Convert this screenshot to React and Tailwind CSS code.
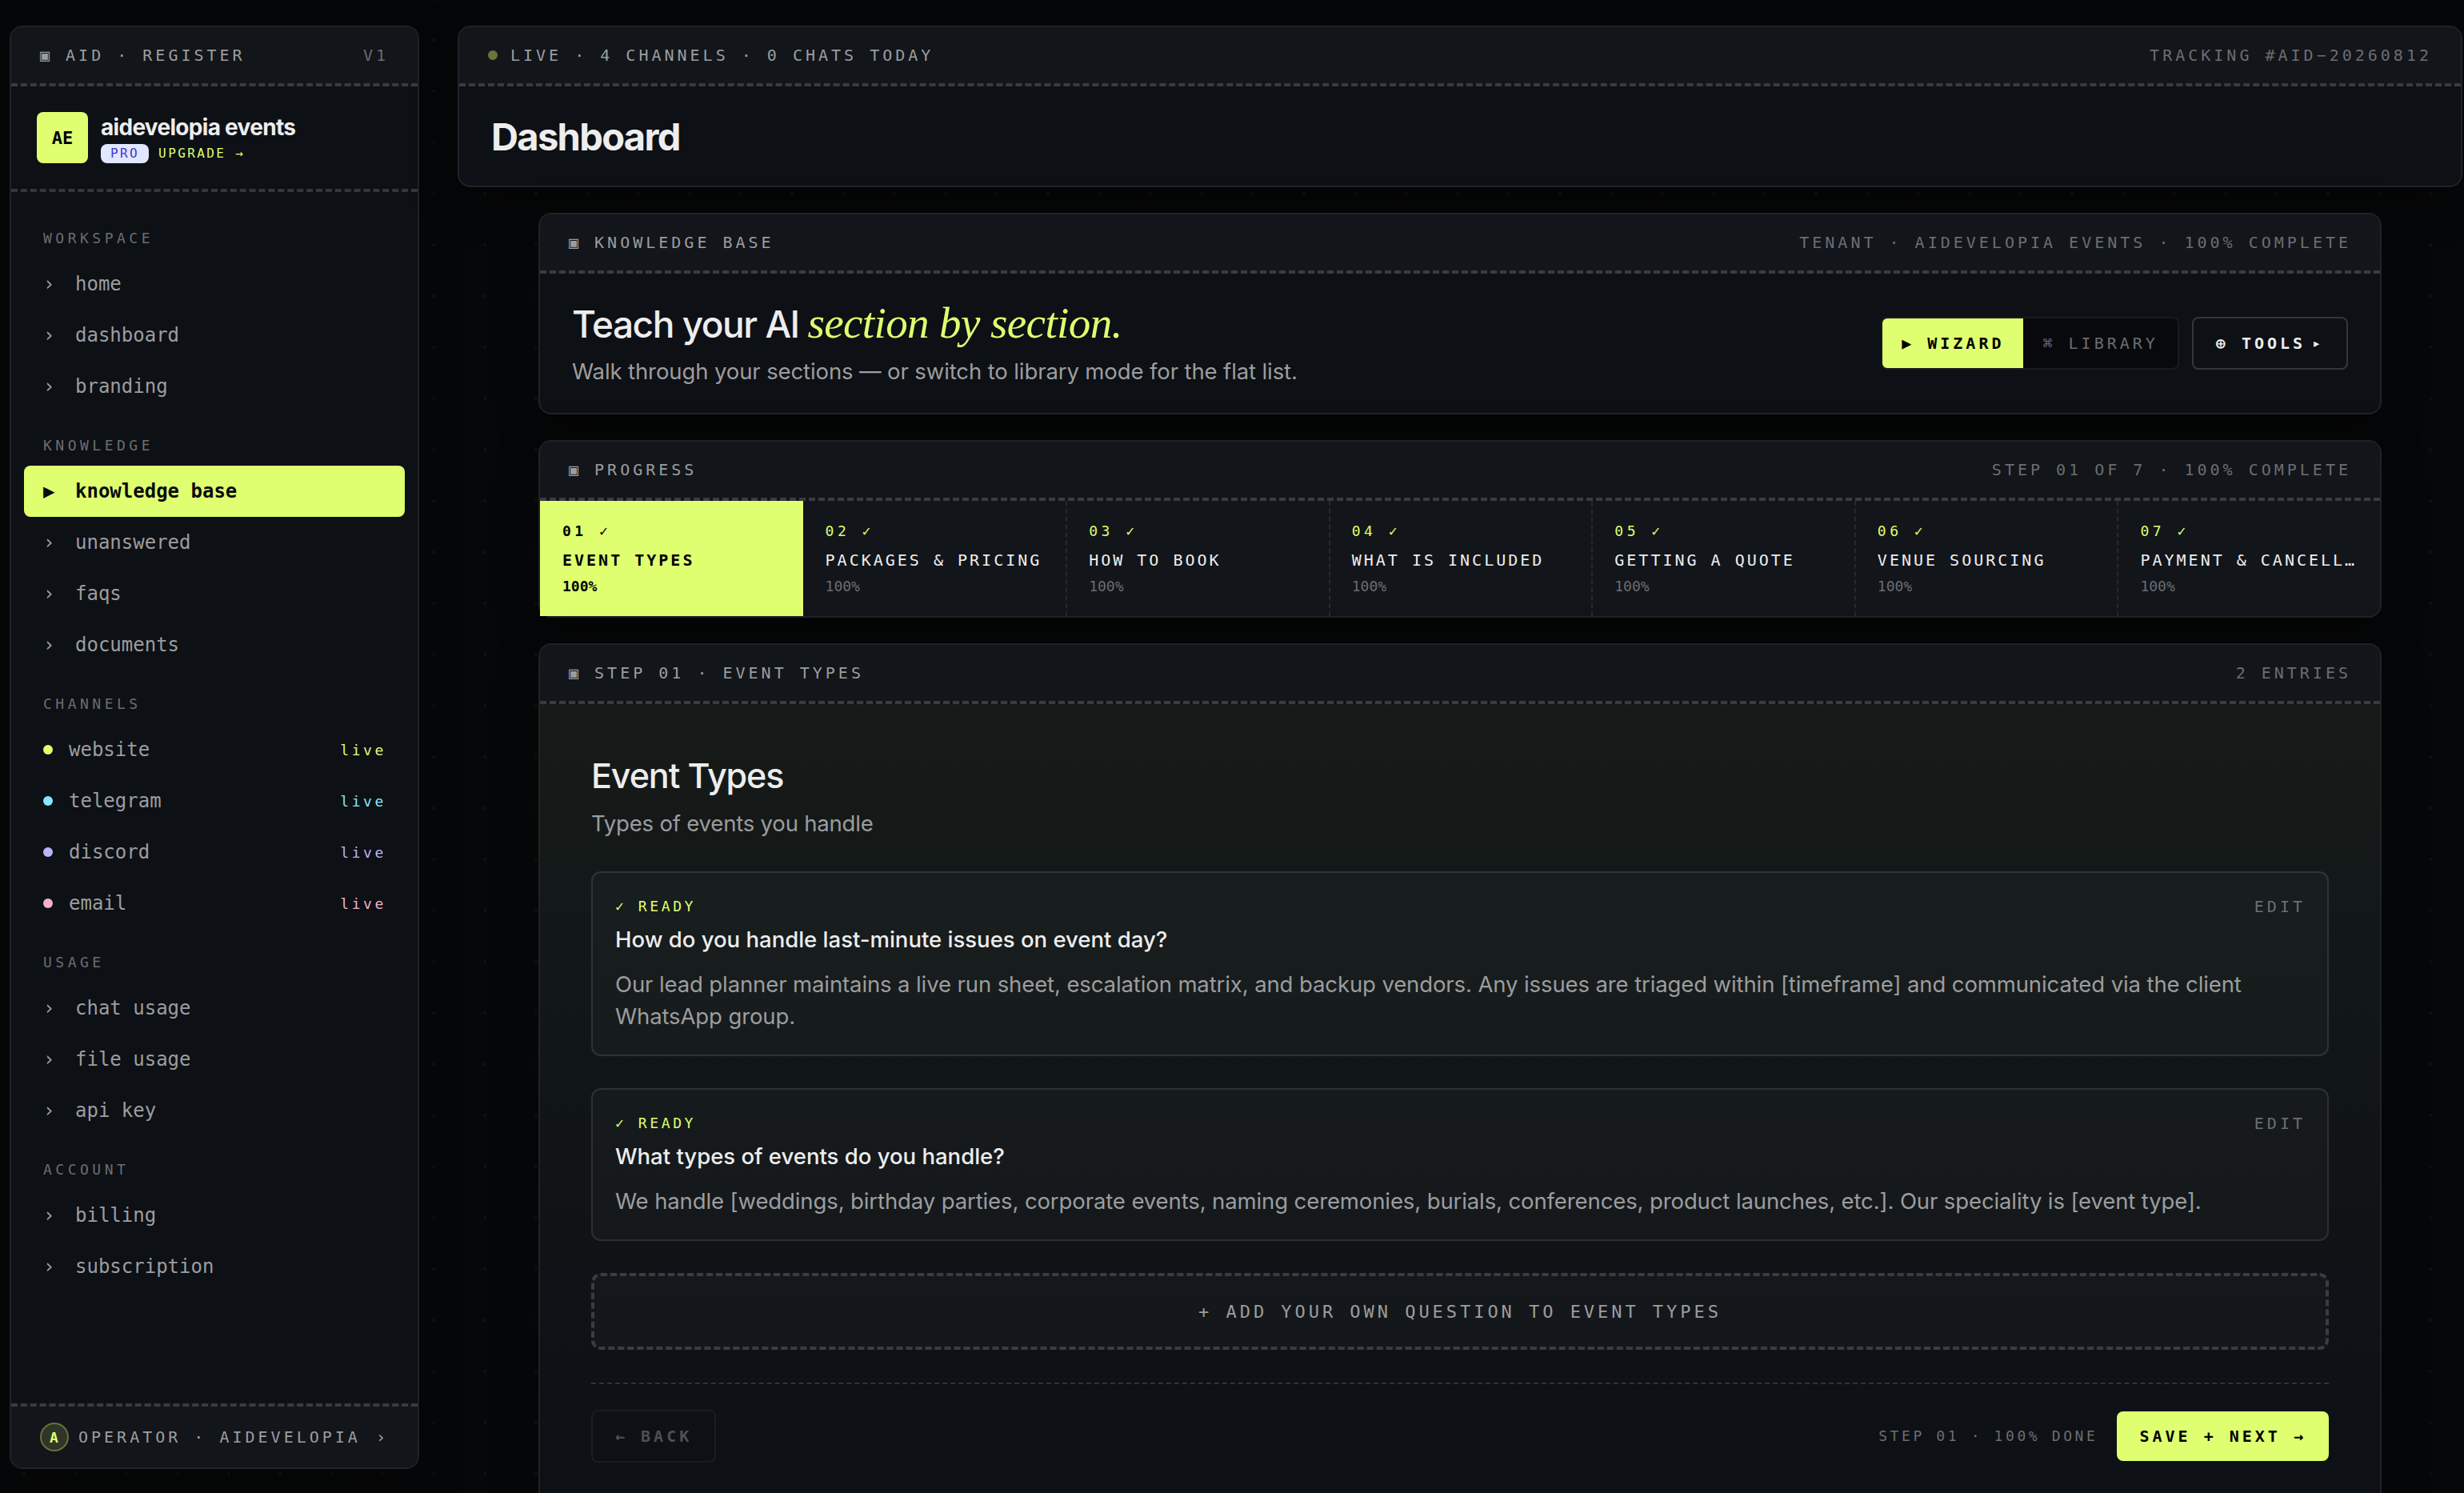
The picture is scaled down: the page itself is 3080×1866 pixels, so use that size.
import React from 'react';

const NAV_GROUPS = [
  { label: 'WORKSPACE', items: ['home', 'dashboard', 'branding'] },
  { label: 'KNOWLEDGE', items: ['knowledge base', 'unanswered', 'faqs', 'documents'] },
  {
    label: 'CHANNELS',
    channels: [
      { name: 'website', dot: 'bg-[#dfff70]', text: 'text-[#dfff70]' },
      { name: 'telegram', dot: 'bg-[#85e8fb]', text: 'text-[#85e8fb]' },
      { name: 'discord', dot: 'bg-[#b9b5fb]', text: 'text-[#b9b5fb]' },
      { name: 'email', dot: 'bg-[#f5afcb]', text: 'text-[#f5afcb]' },
    ],
  },
  { label: 'USAGE', items: ['chat usage', 'file usage', 'api key'] },
  { label: 'ACCOUNT', items: ['billing', 'subscription'] },
];

const STEPS = [
  'EVENT TYPES',
  'PACKAGES & PRICING',
  'HOW TO BOOK',
  'WHAT IS INCLUDED',
  'GETTING A QUOTE',
  'VENUE SOURCING',
  'PAYMENT & CANCELL…',
];

const ENTRIES = [
  {
    question: 'How do you handle last-minute issues on event day?',
    answer:
      'Our lead planner maintains a live run sheet, escalation matrix, and backup vendors. Any issues are triaged within [timeframe] and communicated via the client WhatsApp group.',
  },
  {
    question: 'What types of events do you handle?',
    answer:
      'We handle [weddings, birthday parties, corporate events, naming ceremonies, burials, conferences, product launches, etc.]. Our speciality is [event type].',
  },
];

const MONO = "font-['DejaVu_Sans_Mono',monospace]";

function Panel({ className = '', children }) {
  return (
    <section className={`rounded-[16px] border-2 border-[#1f2226] bg-[#0d1015] shadow-[0_16px_60px_rgba(0,0,0,0.3)] ${className}`}>
      {children}
    </section>
  );
}

function PanelHeader({ left, right }) {
  return (
    <div className="flex h-[74px] items-center justify-between rounded-t-[14px] border-b-4 border-dashed border-[#383b40] bg-[#12151a] px-9 text-[20px] leading-[30px] tracking-[0.2em] whitespace-pre">
      <span className="flex items-center text-[#9c9d9f]">{left}</span>
      <span className="text-[#6b6d70]">{right}</span>
    </div>
  );
}

function NavItem({ label }) {
  const active = label === 'knowledge base';
  return (
    <a className={`flex h-16 items-center gap-4 rounded-lg px-6 text-[24px] ${active ? 'bg-[#dfff70] font-bold text-[#0a0c0e]' : 'text-[#9c9d9f]'}`}>
      <span className="w-6">{active ? '▶' : '›'}</span>
      <span>{label}</span>
    </a>
  );
}

function ChannelItem({ channel }) {
  return (
    <a className="flex h-16 items-center pr-[23px] pl-6 text-[24px] text-[#9c9d9f]">
      <span className={`mr-5 size-3 rounded-full ${channel.dot}`} />
      <span className="flex-1">{channel.name}</span>
      <span className={`text-[18px] tracking-[0.2em] ${channel.text}`}>live</span>
    </a>
  );
}

function Sidebar() {
  return (
    <Panel className="flex h-[1804px] w-[512px] shrink-0 flex-col">
      <PanelHeader left="▣ AID · REGISTER" right="V1" />

      {/* workspace brand */}
      <div className="flex h-[132px] items-center gap-4 border-b-4 border-dashed border-[#33363a] px-8">
        <div className="flex size-16 items-center justify-center rounded-lg bg-[#dfff70] text-[22px] font-bold text-black">AE</div>
        <div className="flex flex-col">
          <span className="font-['Inter',sans-serif] text-[28px] leading-[38px] font-bold tracking-[-0.025em] text-[#ededed]">aidevelopia events</span>
          <div className="mt-[2px] flex items-center gap-3 text-[16px] leading-[24px] tracking-[0.15em]">
            <span className="rounded-lg bg-[#e0e7ff] px-3 text-[#4338ca]">PRO</span>
            <span className="text-[#dfff70]">UPGRADE →</span>
          </div>
        </div>
      </div>

      <nav className="flex-1 p-4">
        {NAV_GROUPS.map((group) => (
          <div key={group.label} className="pt-7">
            <div className="mb-3 px-6 text-[18px] leading-[27px] tracking-[0.25em] text-[#6b6d70]">{group.label}</div>
            {group.items?.map((item) => <NavItem key={item} label={item} />)}
            {group.channels?.map((channel) => <ChannelItem key={channel.name} channel={channel} />)}
          </div>
        ))}
      </nav>

      <div className="flex h-20 items-center gap-3 rounded-b-[14px] border-t-4 border-dashed border-[#383b40] bg-[#12151a] px-9 text-[20px] tracking-[0.2em] text-[#9c9d9f]">
        <span className="flex size-9 items-center justify-center rounded-full border-2 border-[#64723a] bg-[#2f3627] pr-px text-[18px] font-bold tracking-normal text-[#dfff70]">A</span>
        <span className="flex-1">OPERATOR · AIDEVELOPIA</span>
        <span>›</span>
      </div>
    </Panel>
  );
}

function StepCell({ index, title }) {
  const active = index === 0;
  return (
    <div className={`h-[144px] min-w-0 py-6 pr-5 ${active ? 'bg-[#dfff70] font-bold text-black' : 'bg-[#12151a] text-[#ededed]'} ${index > 1 ? 'border-l-2 border-dashed border-[#25282c] pl-[27px]' : 'pl-7'} ${index === 6 ? 'rounded-br-[14px]' : ''}`}>
      <div className={`text-[18px] leading-[27px] tracking-[0.25em] ${active ? '' : 'text-[#dfff70]'}`}>0{index + 1} ✓</div>
      <div className="mt-2 text-[20px] leading-[30px] tracking-[0.15em] whitespace-nowrap">{title}</div>
      <div className={`mt-1 text-[18px] leading-[27px] ${active ? '' : 'text-[#6b6d70]'}`}>100%</div>
    </div>
  );
}

function Entry({ entry }) {
  return (
    <article className="rounded-[12px] border-2 border-white/10 bg-white/[0.025] p-7">
      <div className="flex h-[27px] items-start justify-between">
        <span className="text-[18px] leading-[27px] tracking-[0.2em] text-[#dfff70]">✓ READY</span>
        <button className="-mr-px text-[20px] leading-[28px] tracking-[0.2em] text-[#6c6f70]">EDIT</button>
      </div>
      <h3 className="mt-[7px] font-['Inter',sans-serif] text-[27.5px] leading-[42px] font-medium text-[#ededed]">{entry.question}</h3>
      <p className="mt-[15px] font-['Inter',sans-serif] text-[27.5px] leading-[40px] tracking-[-0.004em] text-[#9b9d9e]">{entry.answer}</p>
    </article>
  );
}

export default function App() {
  return (
    <div className={`flex h-[1866px] w-[3080px] items-start gap-12 overflow-hidden bg-[#060708] bg-[radial-gradient(circle_at_30px_50px,#0f120d_0,#0f120d_1.5px,transparent_2.5px)] bg-[length:64px_64px] pt-8 pl-3 text-[#ededed] ${MONO}`}>
      <Sidebar />

      <main className="w-[2506px] shrink-0">
        <Panel className="h-[202px]">
          <PanelHeader
            left={<><i className="mr-4 size-3 rounded-full bg-[#68753c]" />LIVE · 4 CHANNELS · 0 CHATS TODAY</>}
            right="TRACKING #AID−20260812"
          />
          <h1 className="px-10 pt-[33px] font-['Inter',sans-serif] text-[47px] leading-[60px] font-bold tracking-[-0.035em]">Dashboard</h1>
        </Panel>

        <div className="mx-auto mt-8 flex w-[2304px] flex-col gap-8">
          <Panel className="h-[252px]">
            <PanelHeader left="▣ KNOWLEDGE BASE" right="TENANT · AIDEVELOPIA EVENTS · 100% COMPLETE" />
            <div className="flex h-[174px] items-center justify-between px-10">
              <div className="pt-[2px] font-['Inter',sans-serif]">
                <h2 className="text-[46px] leading-[60px] font-medium tracking-[-0.032em]">
                  Teach your AI <em className="font-['Liberation_Serif',serif] text-[55px] leading-[40px] font-normal tracking-[-0.011em] text-[#dfff70]">section by section.</em>
                </h2>
                <p className="mt-2 text-[27.5px] leading-[42px] tracking-[-0.004em] text-[#9c9d9f]">Walk through your sections — or switch to library mode for the flat list.</p>
              </div>
              <div className="flex gap-4 text-[20px] leading-[30px] tracking-[0.2em]">
                <div className="flex h-[66px] overflow-hidden rounded-lg border-2 border-[#191b1f] bg-[#08090d]">
                  <button className="bg-[#dfff70] px-6 font-bold text-black">▶ WIZARD</button>
                  <button className="px-6 text-[#6b6d70]">⌘ LIBRARY</button>
                </div>
                <button className="flex items-center gap-2 rounded-lg border-2 border-[#33363a] px-7 font-bold">
                  <span>⊕ TOOLS</span>
                  <span className="text-[18px]">▸</span>
                </button>
              </div>
            </div>
          </Panel>

          <Panel className="h-[222px]">
            <PanelHeader left="▣ PROGRESS" right="STEP 01 OF 7 · 100% COMPLETE" />
            <div className="grid grid-cols-7">
              {STEPS.map((title, i) => <StepCell key={title} index={i} title={title} />)}
            </div>
          </Panel>

          <Panel className="h-[1120px]">
            <PanelHeader left="▣ STEP 01 · EVENT TYPES" right="2 ENTRIES" />
            <div className="bg-linear-to-b from-[#161a18] via-[#131818] via-25% to-[#0d1015] to-[950px] px-16 pt-[60px]">
              <h2 className="font-['Inter',sans-serif] text-[43px] leading-[58px] font-medium tracking-[-0.025em]">Event Types</h2>
              <p className="mt-[10px] font-['Inter',sans-serif] text-[27.5px] leading-[42px] tracking-[-0.007em] text-[#9b9d9e]">Types of events you handle</p>

              <div className="mt-[39px] flex flex-col gap-10">
                {ENTRIES.map((entry) => <Entry key={entry.question} entry={entry} />)}
                <button className="h-24 rounded-[12px] border-4 border-dashed border-[#3a3d40] bg-white/[0.025] text-[22px] tracking-[0.18em] text-[#9b9d9e]">
                  + ADD YOUR OWN QUESTION TO EVENT TYPES
                </button>
              </div>

              {/* wizard controls */}
              <div className="mt-[41px] flex items-center border-t-2 border-dashed border-[#303337] pt-8 text-[20px] leading-[30px] tracking-[0.2em]">
                <button className="h-[66px] rounded-lg border-2 border-[#191c21] px-7 font-bold text-[#4e5053]">← BACK</button>
                <span className="mr-6 ml-auto text-[18px] tracking-[0.2em] text-[#6b6d70]">STEP 01 · 100% DONE</span>
                <button className="h-[62px] rounded-lg bg-[#dfff70] px-7 font-bold text-black">SAVE + NEXT →</button>
              </div>
            </div>
          </Panel>
        </div>
      </main>
    </div>
  );
}
